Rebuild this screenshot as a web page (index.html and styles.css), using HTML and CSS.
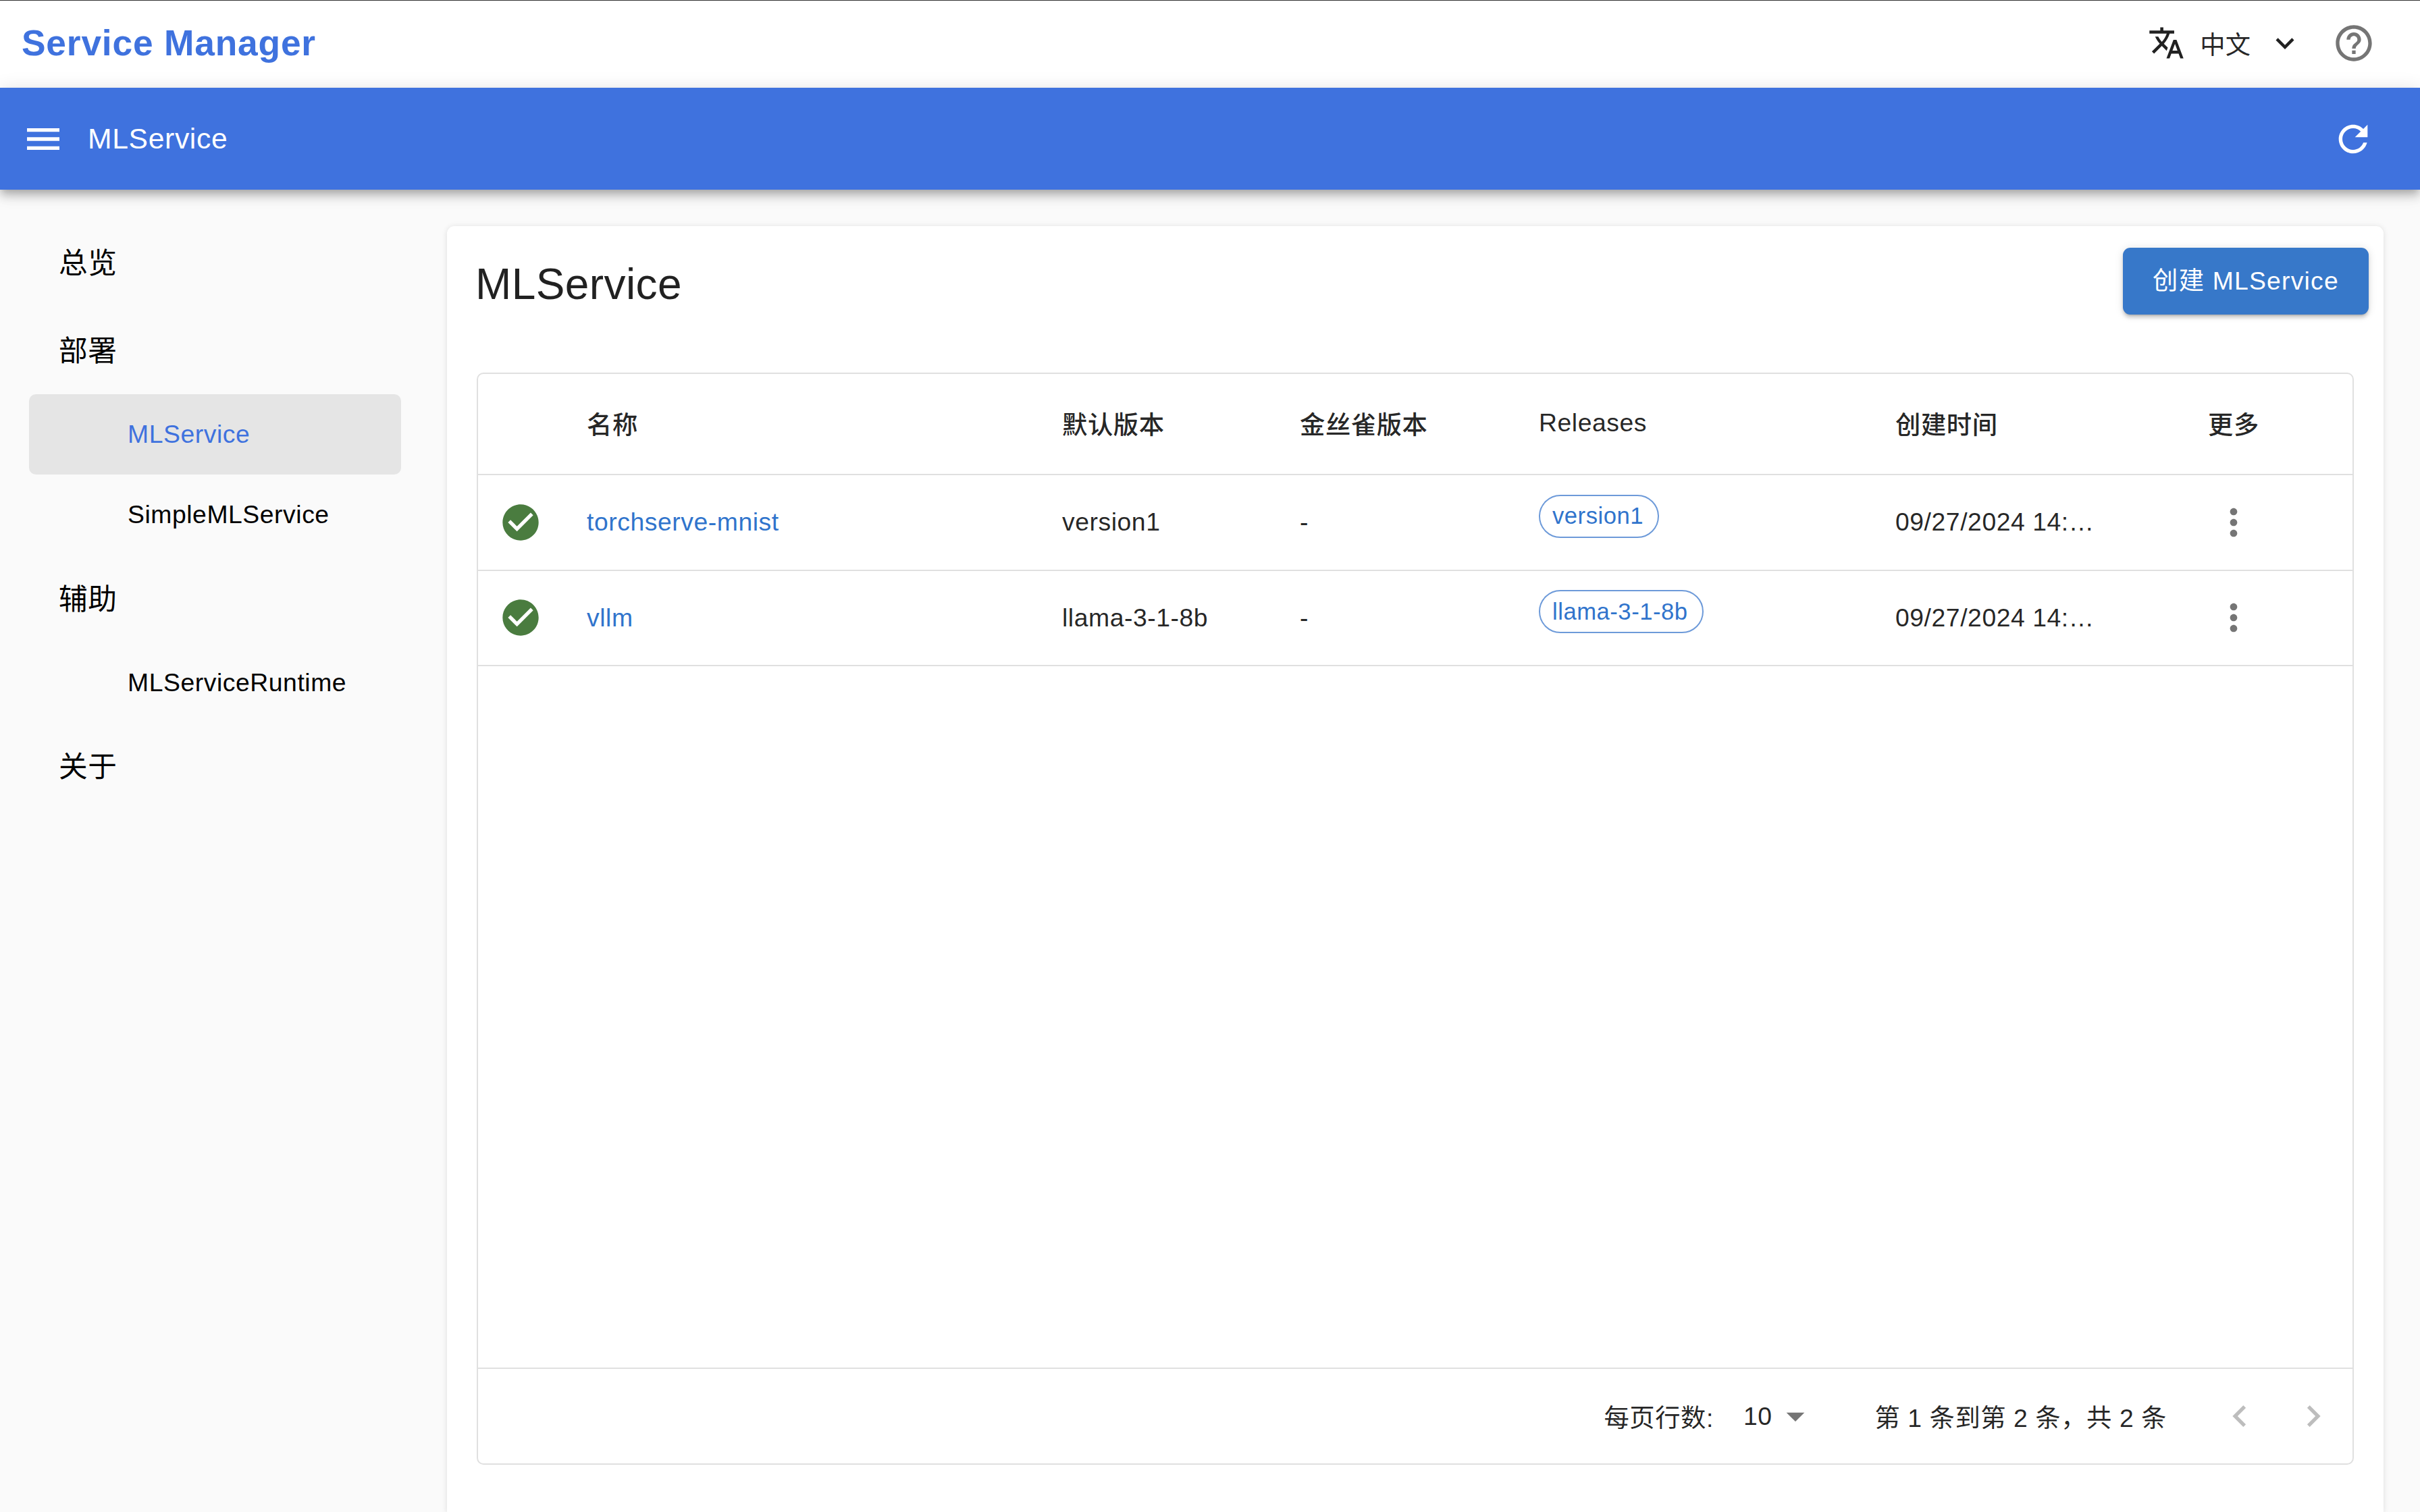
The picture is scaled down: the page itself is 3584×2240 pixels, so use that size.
FILE: index.html
```html
<!DOCTYPE html>
<html lang="zh">
  <head>
    <meta charset="UTF-8" />
    <meta name="viewport" content="width=device-width, initial-scale=1.0" />
    <title>Service Manager</title>
    <link rel="stylesheet" href="styles.css">
  </head>
  <body>
    <div class="page">
      <header class="top">
        <div class="brand">Service Manager</div>
        <div class="top-right">
          <svg class="icon-lang" viewBox="0 0 24 24"><path d="M12.87 15.07l-2.54-2.51.03-.03c1.74-1.94 2.98-4.17 3.71-6.53H17V4h-7V2H8v2H1v1.99h11.17C11.5 7.92 10.44 9.75 9 11.35 8.07 10.32 7.3 9.19 6.69 8h-2c.73 1.63 1.73 3.17 2.98 4.56l-5.09 5.02L4 19l5-5 3.11 3.11.76-2.04zM18.5 10h-2L12 22h2l1.12-3h4.75L21 22h2l-4.5-12zm-2.62 7l1.62-4.33L19.12 17h-3.24z"/></svg>
          <span class="lang">中文</span>
          <svg class="icon-chevron" viewBox="0 0 24 24"><path d="M7.41 8.59L12 13.17l4.59-4.58L18 10l-6 6-6-6 1.41-1.41z"/></svg>
          <svg class="icon icon-help" viewBox="0 0 24 24"><path d="M11 18h2v-2h-2v2zm1-16C6.48 2 2 6.48 2 12s4.48 10 10 10 10-4.48 10-10S17.52 2 12 2zm0 18c-4.41 0-8-3.59-8-8s3.59-8 8-8 8 3.59 8 8-3.59 8-8 8zm0-14c-2.21 0-4 1.79-4 4h2c0-1.1.9-2 2-2s2 .9 2 2c0 2-3 1.75-3 5h2c0-2.25 3-2.5 3-5 0-2.21-1.79-4-4-4z"/></svg>
        </div>
      </header>

      <div class="bar">
        <svg class="icon icon-white" viewBox="0 0 24 24"><path d="M3 18h18v-2H3v2zm0-5h18v-2H3v2zm0-7v2h18V6H3z"/></svg>
        <div class="bar-title">MLService</div>
        <svg class="icon icon-white" viewBox="0 0 24 24"><path d="M17.65 6.35C16.2 4.9 14.21 4 12 4c-4.42 0-7.99 3.58-7.99 8s3.57 8 7.99 8c3.73 0 6.84-2.55 7.73-6h-2.08c-.82 2.33-3.04 4-5.65 4-3.31 0-6-2.69-6-6s2.69-6 6-6c1.66 0 3.14.69 4.22 1.78L13 11h7V4l-2.35 2.35z"/></svg>
      </div>

      <div class="body">
        <nav class="side">
          <div class="side-group">总览</div>
          <div class="side-group">部署</div>
          <div class="side-item side-item-active">MLService</div>
          <div class="side-item">SimpleMLService</div>
          <div class="side-group">辅助</div>
          <div class="side-item">MLServiceRuntime</div>
          <div class="side-group side-group-last">关于</div>
        </nav>

        <main class="card">
          <div class="card-head">
            <h1 class="card-title">MLService</h1>
            <button class="button">创建 MLService</button>
          </div>

          <div class="grid">
            <div class="grid-main">
              <table class="table">
                <colgroup>
                  <col class="col-status">
                  <col class="col-name">
                  <col class="col-default">
                  <col class="col-canary">
                  <col class="col-releases">
                  <col class="col-time">
                  <col>
                </colgroup>
                <thead>
                  <tr>
                    <th></th>
                    <th>名称</th>
                    <th>默认版本</th>
                    <th>金丝雀版本</th>
                    <th>Releases</th>
                    <th>创建时间</th>
                    <th>更多</th>
                  </tr>
                </thead>
                <tbody>
                  <tr>
                    <td class="cell-status"><svg class="icon icon-ok" viewBox="0 0 24 24"><path d="M12 2C6.48 2 2 6.48 2 12s4.48 10 10 10 10-4.48 10-10S17.52 2 12 2zm-2 15l-5-5 1.41-1.41L10 14.17l7.59-7.59L19 8l-9 9z"/></svg></td>
                    <td><a class="link">torchserve-mnist</a></td>
                    <td>version1</td>
                    <td>-</td>
                    <td><span class="chip">version1</span></td>
                    <td>09/27/2024 14:…</td>
                    <td class="cell-more"><svg class="icon icon-more" viewBox="0 0 24 24"><path d="M12 8c1.1 0 2-.9 2-2s-.9-2-2-2-2 .9-2 2 .9 2 2 2zm0 2c-1.1 0-2 .9-2 2s.9 2 2 2 2-.9 2-2-.9-2-2-2zm0 6c-1.1 0-2 .9-2 2s.9 2 2 2 2-.9 2-2-.9-2-2-2z"/></svg></td>
                  </tr>
                  <tr>
                    <td class="cell-status"><svg class="icon icon-ok" viewBox="0 0 24 24"><path d="M12 2C6.48 2 2 6.48 2 12s4.48 10 10 10 10-4.48 10-10S17.52 2 12 2zm-2 15l-5-5 1.41-1.41L10 14.17l7.59-7.59L19 8l-9 9z"/></svg></td>
                    <td><a class="link">vllm</a></td>
                    <td>llama-3-1-8b</td>
                    <td>-</td>
                    <td><span class="chip">llama-3-1-8b</span></td>
                    <td>09/27/2024 14:…</td>
                    <td class="cell-more"><svg class="icon icon-more" viewBox="0 0 24 24"><path d="M12 8c1.1 0 2-.9 2-2s-.9-2-2-2-2 .9-2 2 .9 2 2 2zm0 2c-1.1 0-2 .9-2 2s.9 2 2 2 2-.9 2-2-.9-2-2-2zm0 6c-1.1 0-2 .9-2 2s.9 2 2 2 2-.9 2-2-.9-2-2-2z"/></svg></td>
                  </tr>
                </tbody>
              </table>
            </div>

            <div class="pager">
              <span>每页行数:</span>
              <span class="pager-size">10</span>
              <svg class="icon icon-more pager-arrow" viewBox="0 0 24 24"><path d="M7 10l5 5 5-5z"/></svg>
              <span class="pager-range">第 1 条到第 2 条，共 2 条</span>
              <svg class="icon icon-off pager-prev" viewBox="0 0 24 24"><path d="M15.41 7.41L14 6l-6 6 6 6 1.41-1.41L10.83 12z"/></svg>
              <svg class="icon icon-off pager-next" viewBox="0 0 24 24"><path d="M10 6L8.59 7.41 13.17 12l-4.58 4.59L10 18l6-6z"/></svg>
            </div>
          </div>
        </main>
      </div>
    </div>
  </body>
</html>
```

FILE: styles.css
```css
* {
  box-sizing: border-box;
}
body {
  margin: 0;
  background: #fafafa;
  color: rgba(0, 0, 0, 0.87);
  font-family: "Liberation Sans", "Noto Sans CJK SC", sans-serif;
  font-size: 37.33px;
  letter-spacing: 0.55px;
}
.page {
  height: 100vh;
  display: flex;
  flex-direction: column;
  overflow: hidden;
}
.icon {
  width: 64px;
  height: 64px;
  flex-shrink: 0;
  display: block;
}
.icon-white {
  fill: #fff;
}
.icon-more {
  fill: #757575;
}
.icon-off {
  fill: #bdbdbd;
}
.icon-ok {
  fill: #4a7c3f;
}

/* top */
.top {
  height: 130px;
  flex-shrink: 0;
  background: #fff;
  border-top: 1px solid #333;
  display: flex;
  align-items: center;
  justify-content: space-between;
  padding: 0 66px 4px 32px;
}
.brand {
  color: #3f72de;
  font-size: 53.33px;
  font-weight: bold;
  letter-spacing: 0.8px;
}
.top-right {
  display: flex;
  align-items: center;
}
.icon-lang {
  width: 55px;
  height: 55px;
  fill: #212121;
}
.lang {
  margin-left: 22px;
  letter-spacing: 0;
}
.icon-chevron {
  width: 54px;
  height: 54px;
  fill: #212121;
  margin-left: 24px;
}
.icon-help {
  fill: #757575;
  margin-left: 43px;
}

/* blue bar */
.bar {
  height: 151px;
  flex-shrink: 0;
  background: #3f72de;
  color: #fff;
  display: flex;
  align-items: center;
  padding: 0 67px 0 32px;
  position: relative;
  box-shadow: 0 5px 11px -3px rgba(0, 0, 0, 0.2), 0 11px 13px 0 rgba(0, 0, 0, 0.14), 0 3px 27px 0 rgba(0, 0, 0, 0.12);
}
.bar-title {
  flex: 1;
  margin-left: 34px;
  font-size: 42.67px;
  letter-spacing: 0.65px;
}

/* layout */
.body {
  flex: 1;
  display: flex;
  min-height: 0;
}
.side {
  width: 662px;
  flex-shrink: 0;
  padding: 43px 68px 0 43px;
}
.side-group {
  height: 130px;
  display: flex;
  align-items: center;
  padding: 0 0 6px 44px;
  font-size: 42.67px;
  color: #000;
}
.side-group-last {
  padding-bottom: 8px;
}
.side-item {
  height: 119px;
  display: flex;
  align-items: center;
  padding-left: 146px;
  color: #000;
  border-radius: 10px;
}
.side-item-active {
  background: #e5e5e5;
  color: #3f72de;
}

/* card */
.card {
  flex: 1;
  margin: 54px 54px 0 0;
  padding: 32px 22px 70px 44px;
  background: #fff;
  border-radius: 11px 11px 0 0;
  box-shadow: 0 1px 8px rgba(0, 0, 0, 0.12);
  display: flex;
  flex-direction: column;
  min-width: 0;
}
.card-head {
  height: 99px;
  flex-shrink: 0;
  display: flex;
  align-items: center;
  justify-content: space-between;
  margin-bottom: 86px;
}
.card-title {
  margin: 8px 0 0 -2px;
  font-size: 64px;
  font-weight: normal;
  letter-spacing: 0.4px;
}
.button {
  width: 364px;
  height: 99px;
  padding: 0 0 8px;
  border: 0;
  border-radius: 11px;
  background: #3778c9;
  color: #fff;
  font-family: inherit;
  font-size: 37.33px;
  letter-spacing: 1.2px;
  box-shadow: 0 3px 3px -2px rgba(0, 0, 0, 0.2), 0 5px 5px 0 rgba(0, 0, 0, 0.14), 0 1px 13px 0 rgba(0, 0, 0, 0.12);
}

/* table */
.grid {
  flex: 1;
  margin-right: 22px;
  border: 2px solid #e0e0e0;
  border-radius: 10px;
  display: flex;
  flex-direction: column;
  min-height: 0;
}
.grid-main {
  flex: 1;
}
.table {
  width: 100%;
  table-layout: fixed;
  border-collapse: separate;
  border-spacing: 0;
}
.col-status {
  width: 161px;
}
.col-name {
  width: 704px;
}
.col-default {
  width: 352px;
}
.col-canary {
  width: 354px;
}
.col-releases {
  width: 528px;
}
.col-time {
  width: 463px;
}
.table th {
  height: 150px;
  padding: 0 0 3px;
  text-align: left;
  font-weight: 500;
  border-bottom: 2px solid #e0e0e0;
}
.table td {
  height: 141.5px;
  padding: 0;
  border-bottom: 2px solid #e0e0e0;
}
.table td.cell-status {
  padding-left: 31px;
}
.table td.cell-more {
  padding-left: 6px;
}
.link {
  color: #3074cc;
}
.chip {
  display: inline-flex;
  align-items: center;
  height: 64px;
  padding: 0 21px 0 18px;
  margin-bottom: 18px;
  border: 2px solid #6d9ad9;
  border-radius: 32px;
  color: #3074cc;
  font-size: 34.67px;
  letter-spacing: 0.5px;
  vertical-align: middle;
}

/* pager */
.pager {
  height: 142px;
  flex-shrink: 0;
  border-top: 2px solid #e0e0e0;
  display: flex;
  align-items: center;
  justify-content: flex-end;
  padding-right: 26px;
}
.pager-size {
  margin-left: 44px;
}
.pager-arrow {
  margin-left: 2px;
}
.pager-range {
  margin-left: 86px;
}
.pager-prev {
  margin-left: 76px;
}
.pager-next {
  margin-left: 45px;
}
```
